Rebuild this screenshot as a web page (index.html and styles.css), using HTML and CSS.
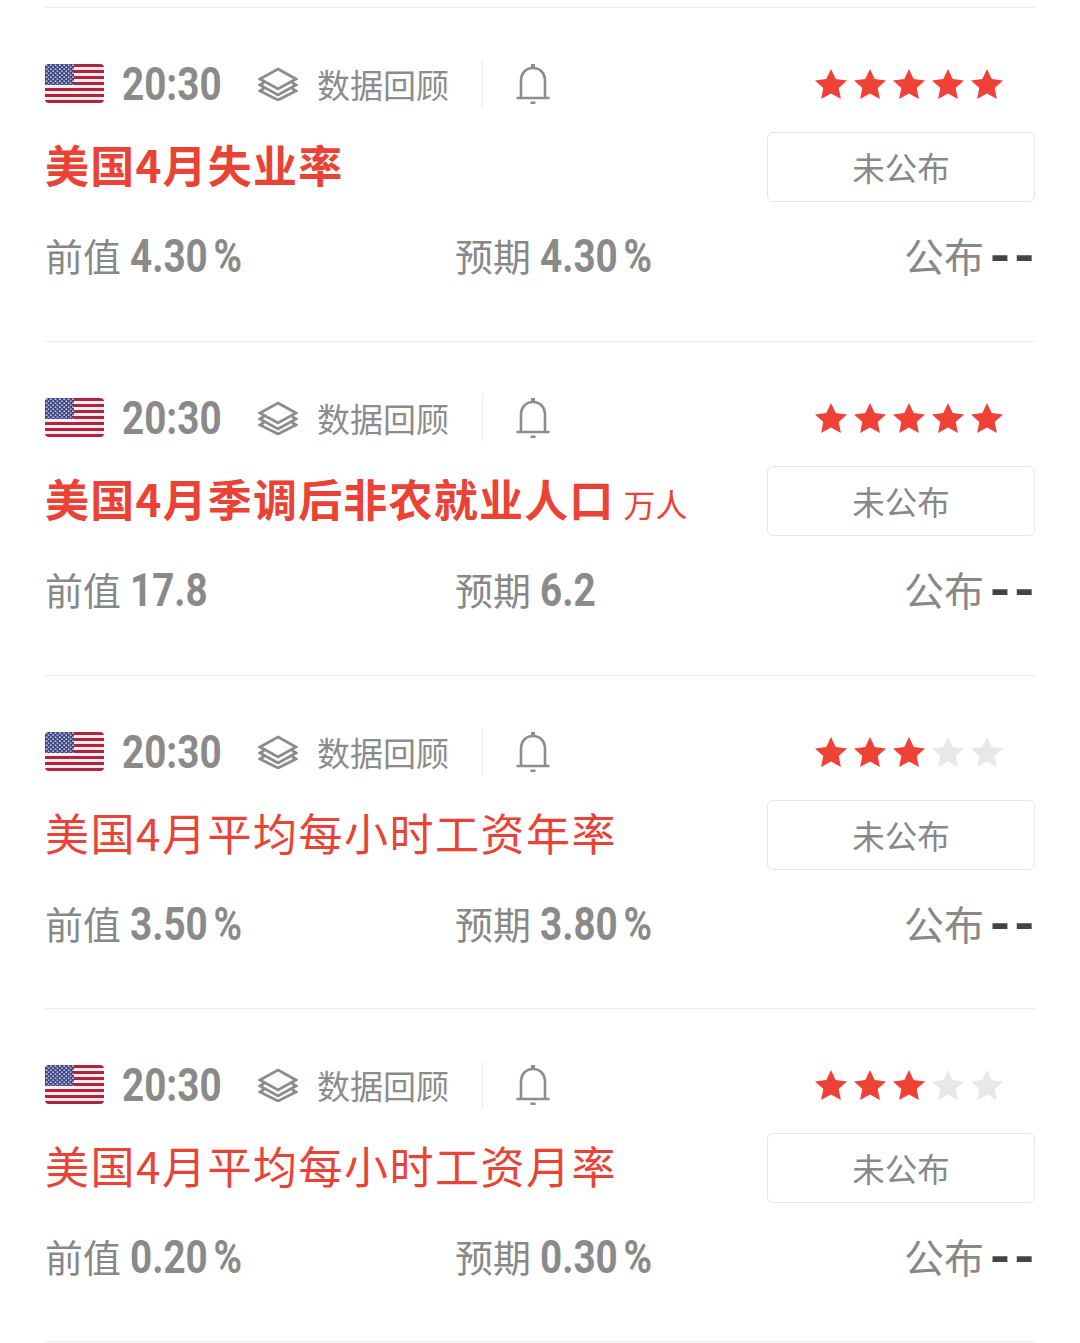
FILE: index.html
```html
<!DOCTYPE html>
<html lang="zh-CN">
<head>
<meta charset="utf-8">
<title>数据回顾</title>
<link rel="stylesheet" href="styles.css">
</head>
<body>
<svg class="defs" width="0" height="0" aria-hidden="true">
  <defs>
    <clipPath id="flag-clip"><rect width="59" height="39" rx="4"/></clipPath>
    <pattern id="flag-dots" width="4.4" height="4" patternUnits="userSpaceOnUse">
      <circle cx="1.6" cy="1.2" r=".85" fill="#d9dcec"/>
      <circle cx="3.8" cy="3.2" r=".85" fill="#d9dcec"/>
    </pattern>
    <symbol id="flag" viewBox="0 0 59 39">
      <g clip-path="url(#flag-clip)">
        <rect width="59" height="39" fill="#fbeeee"/>
        <g fill="#b3233f">
          <rect y="0" width="59" height="3"/><rect y="6" width="59" height="3"/>
          <rect y="12" width="59" height="3"/><rect y="18" width="59" height="3"/>
          <rect y="24" width="59" height="3"/><rect y="30" width="59" height="3"/>
          <rect y="36" width="59" height="3"/>
        </g>
        <rect width="29" height="21" fill="#3d4684"/>
        <rect width="29" height="21" fill="url(#flag-dots)"/>
      </g>
    </symbol>
    <symbol id="layers" viewBox="0 0 40 34">
      <g fill="none" stroke="#8c8c8c" stroke-width="2.8" stroke-linejoin="miter">
        <path d="M20 2 38 12 20 22 2 12Z"/>
        <path d="M6 15.500 2 18 20 28 38 18 34 15.500"/>
        <path d="M6 21.500 2 24 20 33 38 24 34 21.500"/>
      </g>
    </symbol>
    <symbol id="bell" viewBox="0 0 34 40">
      <g fill="none" stroke="#8c8c8c" stroke-width="2.6">
        <path d="M5 33.500V17C5 9 10 4 17 4S29 9 29 17V33.500"/>
        <path d="M0.500 34H33.500"/>
      </g>
      <path d="M15 0h4v4h-4zM14.500 37.500h5v2.500h-5z" fill="#8c8c8c"/>
    </symbol>
    <symbol id="star" viewBox="0 0 32 30">
      <path d="M16 0 20.700 10 32 11.400 23.700 19 25.900 30 16 24.500 6.100 30 8.300 19 0 11.400 11.300 10Z"/>
    </symbol>
  </defs>
</svg>

<main class="list">
  <article class="item">
    <div class="row-top">
      <div class="meta">
        <svg class="flag"><use href="#flag"/></svg>
        <span class="time">20:30</span>
        <svg class="layers"><use href="#layers"/></svg>
        <span class="review">数据回顾</span>
        <span class="divider"></span>
        <svg class="bell"><use href="#bell"/></svg>
      </div>
      <div class="stars">
        <svg class="star on"><use href="#star"/></svg><svg class="star on"><use href="#star"/></svg><svg class="star on"><use href="#star"/></svg><svg class="star on"><use href="#star"/></svg><svg class="star on"><use href="#star"/></svg>
      </div>
    </div>
    <div class="row-title">
      <h2 class="title strong">美国4月失业率</h2>
      <div class="status">未公布</div>
    </div>
    <div class="row-values">
      <div class="value">前值<b class="num">4.30<span class="pct">%</span></b></div>
      <div class="value">预期<b class="num">4.30<span class="pct">%</span></b></div>
      <div class="value actual">公布<b class="dash">--</b></div>
    </div>
  </article>

  <article class="item">
    <div class="row-top">
      <div class="meta">
        <svg class="flag"><use href="#flag"/></svg>
        <span class="time">20:30</span>
        <svg class="layers"><use href="#layers"/></svg>
        <span class="review">数据回顾</span>
        <span class="divider"></span>
        <svg class="bell"><use href="#bell"/></svg>
      </div>
      <div class="stars">
        <svg class="star on"><use href="#star"/></svg><svg class="star on"><use href="#star"/></svg><svg class="star on"><use href="#star"/></svg><svg class="star on"><use href="#star"/></svg><svg class="star on"><use href="#star"/></svg>
      </div>
    </div>
    <div class="row-title">
      <h2 class="title strong">美国4月季调后非农就业人口<span class="unit">万人</span></h2>
      <div class="status">未公布</div>
    </div>
    <div class="row-values">
      <div class="value">前值<b class="num">17.8</b></div>
      <div class="value">预期<b class="num">6.2</b></div>
      <div class="value actual">公布<b class="dash">--</b></div>
    </div>
  </article>

  <article class="item">
    <div class="row-top">
      <div class="meta">
        <svg class="flag"><use href="#flag"/></svg>
        <span class="time">20:30</span>
        <svg class="layers"><use href="#layers"/></svg>
        <span class="review">数据回顾</span>
        <span class="divider"></span>
        <svg class="bell"><use href="#bell"/></svg>
      </div>
      <div class="stars">
        <svg class="star on"><use href="#star"/></svg><svg class="star on"><use href="#star"/></svg><svg class="star on"><use href="#star"/></svg><svg class="star"><use href="#star"/></svg><svg class="star"><use href="#star"/></svg>
      </div>
    </div>
    <div class="row-title">
      <h2 class="title">美国4月平均每小时工资年率</h2>
      <div class="status">未公布</div>
    </div>
    <div class="row-values">
      <div class="value">前值<b class="num">3.50<span class="pct">%</span></b></div>
      <div class="value">预期<b class="num">3.80<span class="pct">%</span></b></div>
      <div class="value actual">公布<b class="dash">--</b></div>
    </div>
  </article>

  <article class="item">
    <div class="row-top">
      <div class="meta">
        <svg class="flag"><use href="#flag"/></svg>
        <span class="time">20:30</span>
        <svg class="layers"><use href="#layers"/></svg>
        <span class="review">数据回顾</span>
        <span class="divider"></span>
        <svg class="bell"><use href="#bell"/></svg>
      </div>
      <div class="stars">
        <svg class="star on"><use href="#star"/></svg><svg class="star on"><use href="#star"/></svg><svg class="star on"><use href="#star"/></svg><svg class="star"><use href="#star"/></svg><svg class="star"><use href="#star"/></svg>
      </div>
    </div>
    <div class="row-title">
      <h2 class="title">美国4月平均每小时工资月率</h2>
      <div class="status">未公布</div>
    </div>
    <div class="row-values">
      <div class="value">前值<b class="num">0.20<span class="pct">%</span></b></div>
      <div class="value">预期<b class="num">0.30<span class="pct">%</span></b></div>
      <div class="value actual">公布<b class="dash">--</b></div>
    </div>
  </article>
</main>
</body>
</html>
```

FILE: styles.css
```css
* { box-sizing: border-box; }
html, body { margin: 0; background: #fff; }
body {
  height: 1343px;
  overflow: hidden;
  font-family: "Noto Sans CJK SC", "Noto Sans", sans-serif;
  color: #888;
}
.defs { position: absolute; }
.list {
  margin: 7px 45px 0;
  border-top: 1px solid #ebebeb;
}
.item {
  height: 333px;
  border-bottom: 1px solid #ebebeb;
  display: flex;
  flex-direction: column;
}
.item:nth-child(-n+2) { height: 334px; }
.row-top {
  height: 46px;
  margin-top: 53px;
  display: flex;
  align-items: center;
  justify-content: space-between;
}
.meta { display: flex; align-items: center; }
.flag { width: 59px; height: 39px; flex: none; margin-top: -1px; }
.time {
  margin-left: 18px;
  width: 99px;
  font-family: "Roboto", sans-serif;
  font-size: 46px;
  line-height: 46px;
  font-weight: 700;
  color: #8a8a8a;
  display: inline-block;
  transform: scaleX(.84);
  transform-origin: left center;
  white-space: nowrap;
}
.layers { width: 40px; height: 34px; margin-left: 37px; flex: none; }
.review { margin-left: 19px; font-size: 33px; line-height: 46px; color: #8c8c8c; }
.divider { width: 1px; height: 46px; margin-left: 33px; background: #e8e8e8; }
.bell { width: 34px; height: 40px; margin-left: 33px; flex: none; }
.stars { display: flex; gap: 7px; margin-right: 32px; }
.star { width: 32px; height: 30px; fill: #e8e8e8; flex: none; }
.star.on { fill: #ef4135; }
.row-title {
  height: 70px;
  margin-top: 25px;
  display: flex;
  align-items: flex-start;
  justify-content: space-between;
}
.title {
  margin: 0;
  font-size: 44px;
  line-height: 64px;
  font-weight: 400;
  letter-spacing: 1.5px;
  color: #ea4335;
  white-space: nowrap;
}
.title.strong { font-weight: 700; letter-spacing: 1.2px; }
.unit {
  margin-left: 9px;
  font-size: 32px;
  line-height: 1;
  font-weight: 400;
  letter-spacing: 0;
}
.status {
  width: 268px;
  height: 70px;
  border: 1px solid #e6e6e6;
  border-radius: 6px;
  font-size: 32.5px;
  line-height: 68px;
  text-align: center;
  color: #888;
}
.row-values {
  margin-top: 22px;
  display: grid;
  grid-template-columns: 410px 1fr auto;
  height: 58px;
  align-items: center;
}
.value {
  font-size: 38px;
  line-height: 58px;
  color: #888;
  display: flex;
  align-items: center;
}
.num {
  margin: 3px 0 0 9px;
  font-family: "Roboto", sans-serif;
  font-size: 46px;
  font-weight: 700;
  color: #8a8a8a;
  display: inline-block;
  transform: scaleX(.84);
  transform-origin: left center;
  white-space: nowrap;
}
.pct { margin-left: 7px; }
.actual { font-size: 40px; }
.dash {
  margin-left: 15px;
  font-family: "Liberation Sans", sans-serif;
  font-size: 48px;
  line-height: 58px;
  font-weight: 700;
  letter-spacing: 4px;
  margin-right: -4px;
  color: #444;
  display: inline-block;
  transform: scaleX(1.22);
  transform-origin: right center;
}
```
